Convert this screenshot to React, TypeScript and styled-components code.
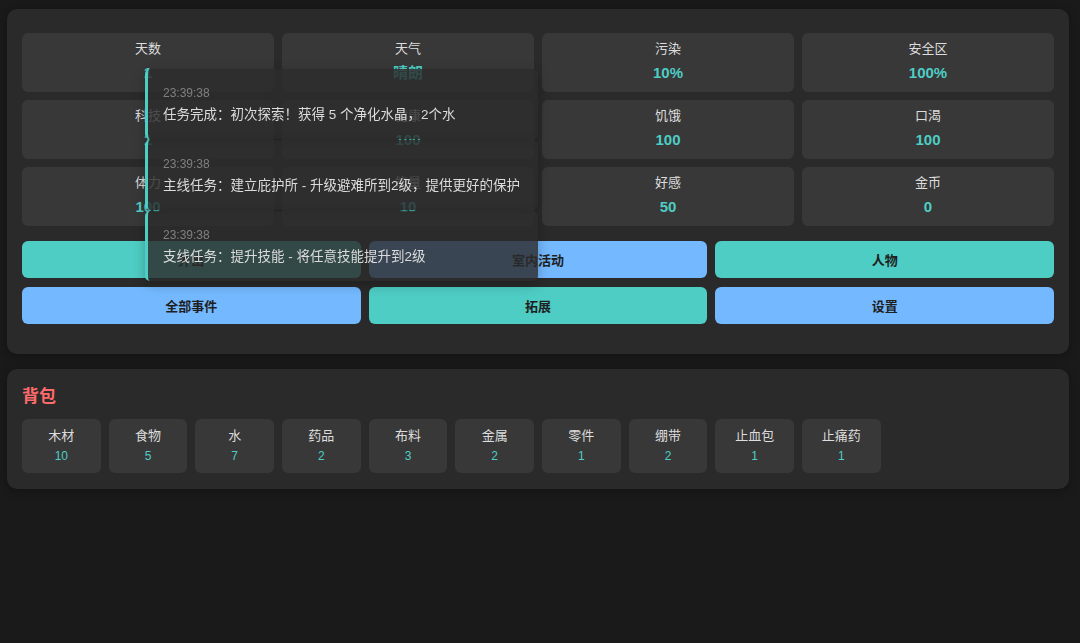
import React from "react";
import styled, { createGlobalStyle } from "styled-components";

const stats = [
    { label: "天数", value: "1" },
    { label: "天气", value: "晴朗" },
    { label: "污染", value: "10%" },
    { label: "安全区", value: "100%" },
    { label: "科技", value: "1" },
    { label: "健康", value: "100" },
    { label: "饥饿", value: "100" },
    { label: "口渴", value: "100" },
    { label: "体力", value: "100" },
    { label: "能量", value: "10" },
    { label: "好感", value: "50" },
    { label: "金币", value: "0" },
];

const actions: { label: string; tone: "teal" | "blue" }[] = [
    { label: "外出", tone: "teal" },
    { label: "室内活动", tone: "blue" },
    { label: "人物", tone: "teal" },
    { label: "全部事件", tone: "blue" },
    { label: "拓展", tone: "teal" },
    { label: "设置", tone: "blue" },
];

const items = [
    { name: "木材", count: 10 },
    { name: "食物", count: 5 },
    { name: "水", count: 7 },
    { name: "药品", count: 2 },
    { name: "布料", count: 3 },
    { name: "金属", count: 2 },
    { name: "零件", count: 1 },
    { name: "绷带", count: 2 },
    { name: "止血包", count: 1 },
    { name: "止痛药", count: 1 },
];

const notices = [
    "任务完成：初次探索！获得 5 个净化水晶，2个水",
    "主线任务：建立庇护所 - 升级避难所到2级，提供更好的保护",
    "支线任务：提升技能 - 将任意技能提升到2级",
];

export default function App() {
    return (
        <>
            <GlobalStyle />
            <Page>
                <Panel>
                    <StatsGrid>
                        {stats.map((s) => (
                            <StatCell key={s.label}>
                                <StatLabel>{s.label}</StatLabel>
                                <StatValue>{s.value}</StatValue>
                            </StatCell>
                        ))}
                    </StatsGrid>
                    <ActionGrid>
                        {actions.map((a) => (
                            <ActionButton key={a.label} $tone={a.tone}>
                                {a.label}
                            </ActionButton>
                        ))}
                    </ActionGrid>
                </Panel>

                <BagPanel>
                    <BagTitle>背包</BagTitle>
                    <ItemGrid>
                        {items.map((it) => (
                            <ItemCell key={it.name}>
                                <ItemName>{it.name}</ItemName>
                                <ItemCount>{it.count}</ItemCount>
                            </ItemCell>
                        ))}
                    </ItemGrid>
                </BagPanel>
            </Page>

            {/* toast notifications floating over the dashboard */}
            <NoticeStack>
                {notices.map((n, i) => (
                    <Notice key={i}>
                        <NoticeTime>23:39:38</NoticeTime>
                        <NoticeText>{n}</NoticeText>
                    </Notice>
                ))}
            </NoticeStack>
        </>
    );
}

// ---------------------------------------------------- Style ----------------------------------------------------------- //

const GlobalStyle = createGlobalStyle`
    html, body {
        margin: 0;
        background: #1a1a1a;
        font-family: "Liberation Sans", "Noto Sans CJK SC", sans-serif;
    }
`;

const Page = styled.div`
    display: flex;
    flex-direction: column;
    gap: 15px;
    padding: 9px 11px 0 7px;
    min-height: 643px;
    box-sizing: border-box;
`;

const Panel = styled.div`
    background: #2a2a2a;
    border-radius: 10px;
    padding: 24px 15px 30px;
    box-shadow: 0 2px 10px rgba(0, 0, 0, 0.3);
`;

const StatsGrid = styled.div`
    display: grid;
    grid-template-columns: repeat(4, 1fr);
    gap: 8px;
    margin-bottom: 15px;
`;

const StatCell = styled.div`
    background: #383838;
    border-radius: 6px;
    height: 59px;
    box-sizing: border-box;
    padding-top: 7px;
    display: flex;
    flex-direction: column;
    align-items: center;
`;

const StatLabel = styled.div`
    font-size: 13px;
    line-height: 18px;
    color: #dddddd;
    margin-bottom: 5px;
`;

const StatValue = styled.div`
    font-size: 15px;
    line-height: 20px;
    font-weight: 700;
    color: #4ecdc4;
`;

const ActionGrid = styled.div`
    display: grid;
    grid-template-columns: repeat(3, 1fr);
    column-gap: 8px;
    row-gap: 9px;
`;

const ActionButton = styled.button<{ $tone: "teal" | "blue" }>`
    height: 37px;
    border: none;
    border-radius: 6px;
    background: ${({ $tone }) => ($tone === "teal" ? "#4ecdc4" : "#74b9ff")};
    color: #1f1f1f;
    font-family: inherit;
    font-size: 13px;
    font-weight: 700;
    cursor: pointer;
`;

const BagPanel = styled(Panel)`
    padding: 16px 15px 16px;
`;

const BagTitle = styled.div`
    font-size: 17px;
    line-height: 24px;
    font-weight: 700;
    color: #ff6b6b;
    margin-bottom: 10px;
`;

const ItemGrid = styled.div`
    display: grid;
    grid-template-columns: repeat(12, 1fr);
    gap: 8px;
`;

const ItemCell = styled.div`
    background: #383838;
    border-radius: 6px;
    height: 54px;
    box-sizing: border-box;
    padding-top: 8px;
    display: flex;
    flex-direction: column;
    align-items: center;
`;

const ItemName = styled.div`
    font-size: 13px;
    line-height: 18px;
    color: #dddddd;
    margin-bottom: 3px;
`;

const ItemCount = styled.div`
    font-size: 12px;
    line-height: 16px;
    color: #4ecdc4;
`;

const NoticeStack = styled.div`
    position: fixed;
    top: 69px;
    left: 145px;
    width: 393px;
    display: flex;
    flex-direction: column;
    gap: 1px;
`;

const Notice = styled.div`
    background: rgba(44, 44, 44, 0.82);
    border-left: 3px solid #4ecdc4;
    border-radius: 5px;
    padding: 16px 15px 14px;
    box-shadow: 0 4px 12px rgba(0, 0, 0, 0.25);
`;

const NoticeTime = styled.div`
    font-size: 12px;
    line-height: 16px;
    color: #808080;
`;

const NoticeText = styled.div`
    font-size: 13.5px;
    line-height: 20px;
    color: #dcdcdc;
    margin-top: 4px;
    white-space: nowrap;
`;
